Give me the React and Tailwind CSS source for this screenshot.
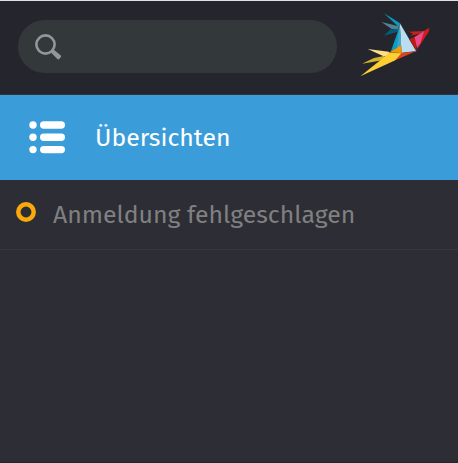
function SearchIcon() {
  return (
    <svg className="block" width="30" height="30" viewBox="0 0 30 30" fill="none">
      <circle cx="12.5" cy="12.5" r="9.1" stroke="#93979a" strokeWidth="2.6" />
      <path d="M17.2 19.8L20 16.9L27.6 23.3Q28.6 24.3 27.8 25.2L26.2 27.1Q25.3 27.9 24.3 27Z" fill="#93979a" />
    </svg>
  );
}

function Logo() {
  return (
    <svg className="block" width="74" height="66" viewBox="24 36 222 198">
      <path d="M102 40L148 68L147 82Z" fill="#069cbd" />
      <path d="M94 66L146 79L145 89L125 87Z" fill="#528395" />
      <path d="M102 107L121 88L146 90L143 95Z" fill="#045c7c" />
      <path d="M147 85L150 138L122 156Z" fill="#079fc3" />
      <path d="M149 68L154 138L141 144L147 84Z" fill="#42a4cc" />
      <path d="M149 68L199 154L154 159L152 108Z" fill="#b9def1" />
      <path d="M178 118L200 108L199 153Z" fill="#bd1917" />
      <path d="M176 95L223 93L207 101L179 108L190 101Z" fill="#cf2018" />
      <path d="M223 92L238 83L236 95L199 152Z" fill="#d71920" />
      <path d="M194 111L223 92L211 130L201 144Z" fill="#ea4b83" />
      <path d="M154 159L199 153L136 181Z" fill="#e0421e" />
      <path d="M53 147L116 155L122 168L99 168Z" fill="#ffdf85" />
      <path d="M36 191L72 174L105 167L97 181Z" fill="#d6b52d" />
      <path d="M31 229L91 181L119 157L155 159L136 181Z" fill="#ffce33" />
      <path d="M153 136L156 160L119 157Z" fill="#f39b06" />
      <path d="M149 68L199 154L154 159L153 136M119 157L156 160" fill="none" stroke="#343b40" strokeOpacity="0.35" strokeWidth="1.5" />
    </svg>
  );
}

function ListIcon() {
  return (
    <svg className="block" width="36" height="33" viewBox="0 0 36 33" fill="#fff">
      <circle cx="4" cy="4" r="3.7" />
      <circle cx="4" cy="16.3" r="3.7" />
      <circle cx="4" cy="28.6" r="3.7" />
      <rect x="11" y="0.3" width="25" height="7.4" rx="3.7" />
      <rect x="11" y="12.6" width="25" height="7.4" rx="3.7" />
      <rect x="11" y="24.9" width="25" height="7.4" rx="3.7" />
    </svg>
  );
}

function StatusRing() {
  return (
    <svg className="mb-[5px] block" width="20" height="20" viewBox="0 0 20 20" fill="none">
      <circle cx="10" cy="10" r="7.7" stroke="#faa90a" strokeWidth="4.5" />
    </svg>
  );
}

export default function App() {
  return (
    <div className="flex h-[463px] w-[458px] flex-col overflow-hidden border-b border-[#25252d] bg-[#2d2d36] font-['Fira_Sans','Noto_Sans',sans-serif]">
      <header className="flex h-[95px] shrink-0 items-start border-t border-b border-t-[#dce4e1] border-b-[#35343c] bg-[#25262d]">
        <div className="mt-[19px] ml-[18px] flex h-[53px] w-[319px] items-center rounded-full bg-[#33383b] pt-px pl-[15px]">
          <SearchIcon />
        </div>
        <div className="mt-[11px] ml-[21px]">
          <Logo />
        </div>
      </header>
      <nav className="flex h-[85px] shrink-0 items-center bg-[#3a9dd9] pl-[29px] text-white">
        <ListIcon />
        <span className="ml-[30px] text-[24.8px] leading-8">Übersichten</span>
      </nav>
      <div className="flex h-[70px] shrink-0 items-center border-b border-[#37373f] pl-4">
        <StatusRing />
        <span className="ml-[17px] text-[24.8px] leading-8 whitespace-nowrap text-[#808080]">Anmeldung fehlgeschlagen</span>
      </div>
    </div>
  );
}
